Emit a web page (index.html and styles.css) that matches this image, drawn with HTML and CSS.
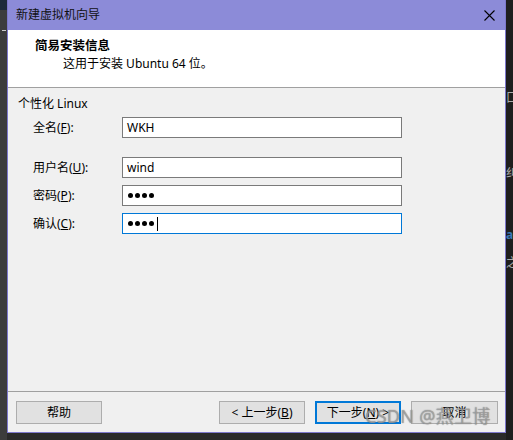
FILE: index.html
```html
<!DOCTYPE html>
<html lang="zh-CN">
<head>
<meta charset="utf-8">
<title>新建虚拟机向导</title>
<link rel="stylesheet" href="styles.css">
</head>
<body>
<div class="screen">
  <div class="strip-left"><div class="strip-top"></div><div class="strip-mark"></div></div>
  <div class="dialog">
    <div class="titlebar">
      <span class="title">新建虚拟机向导</span>
      <svg class="close" width="11" height="11" viewBox="0 0 11 11"><path d="M0.5 0.5 L10.5 10.5 M10.5 0.5 L0.5 10.5" stroke="#000" stroke-width="1.1" fill="none"/></svg>
    </div>
    <div class="header">
      <div class="h-title">简易安装信息</div>
      <div class="h-sub">这用于安装 Ubuntu 64 位。</div>
    </div>
    <div class="content">
      <div class="group">个性化 Linux</div>
      <div class="row">
        <span class="label">全名(<u>F</u>):</span>
        <div class="field">WKH</div>
      </div>
      <div class="row gap-big">
        <span class="label">用户名(<u>U</u>):</span>
        <div class="field">wind</div>
      </div>
      <div class="row">
        <span class="label">密码(<u>P</u>):</span>
        <div class="field dots"><i class="dot"></i><i class="dot"></i><i class="dot"></i><i class="dot"></i></div>
      </div>
      <div class="row">
        <span class="label">确认(<u>C</u>):</span>
        <div class="field dots focus"><i class="dot"></i><i class="dot"></i><i class="dot"></i><i class="dot"></i><span class="caret"></span></div>
      </div>
    </div>
    <div class="footer">
      <button class="btn">帮助</button>
      <span class="spacer"></span>
      <button class="btn">&lt; 上一步(<u>B</u>)</button>
      <button class="btn default">下一步(<u>N</u>) &gt;</button>
      <button class="btn">取消</button>
    </div>
    <div class="watermark">CSDN @燕卫博</div>
  </div>
  <div class="strip-right">
    <span class="frag f1">口</span>
    <span class="frag f2">纠</span>
    <span class="frag f3">a</span>
    <span class="frag f4">之</span>
  </div>
</div>
</body>
</html>
```
FILE: styles.css
```css
* { box-sizing: border-box; }
html, body { margin: 0; padding: 0; }
body {
  width: 513px;
  height: 440px;
  background: #2a2a2a;
  overflow: hidden;
  font-family: "Noto Sans", "Noto Sans CJK SC", sans-serif;
  font-size: 12px;
  color: #000;
}
.screen {
  display: flex;
  width: 513px;
  height: 440px;
}
.strip-left {
  width: 7px;
  background: #3c3c3c;
  display: flex;
  flex-direction: column;
  overflow: hidden;
}
.strip-top { height: 10px; background: #1c2a3a; }
.strip-mark {
  margin-top: 20px;
  margin-left: 2px;
  width: 4px;
  height: 1px;
  background: #ccc;
}
.dialog {
  position: relative;
  width: 499px;
  height: 433px;
  border: 1px solid #7d78cc;
  border-top: none;
  background: #f0f0f0;
  display: flex;
  flex-direction: column;
}
.titlebar {
  height: 30px;
  background: #8c8bd8;
  display: flex;
  align-items: center;
  padding-left: 8px;
  padding-right: 10px;
}
.title { flex: 1; line-height: 16px; color: #111; }
.close { display: block; }
.header {
  height: 58px;
  background: #fff;
  border-bottom: 1px solid #a0a0a0;
  padding-top: 8px;
}
.h-title {
  font-weight: bold;
  padding-left: 27px;
  line-height: 16px;
  font-size: 12.5px;
}
.h-sub {
  padding-left: 55px;
  line-height: 16px;
  margin-top: 2px;
}
.content {
  flex: 1;
  padding: 8px 0 0 10px;
}
.group { line-height: 16px; margin-bottom: 5px; }
.row {
  display: flex;
  align-items: center;
  height: 21px;
  margin-top: 7px;
}
.group + .row { margin-top: 0; }
.row.gap-big { margin-top: 19px; }
.label {
  width: 104px;
  padding-left: 15px;
  line-height: 16px;
}
.field {
  width: 280px;
  height: 21px;
  border: 1px solid #7a7a7a;
  background: #fff;
  padding-left: 4px;
  line-height: 19px;
  display: flex;
  align-items: center;
}
.field.dots { padding-left: 5px; gap: 2px; }
.dot {
  display: block;
  width: 5px;
  height: 5px;
  border-radius: 50%;
  background: #000;
}
.field.focus { border-color: #0078d7; }
.caret {
  display: block;
  width: 1px;
  height: 14px;
  background: #000;
  margin-left: 1px;
}
.footer {
  height: 41px;
  border-top: 1px solid #a0a0a0;
  display: flex;
  align-items: flex-start;
  padding: 9px 7px 0 8px;
}
.spacer { flex: 1; }
.btn {
  width: 86px;
  height: 23px;
  border: 1px solid #adadad;
  background: #e1e1e1;
  font-family: "Noto Sans", "Noto Sans CJK SC", sans-serif;
  font-size: 12px;
  color: #000;
  padding: 0;
  line-height: 16px;
  margin-left: 10px;
}
.btn:first-child { margin-left: 0; }
.btn:last-child { width: 87px; }
.btn.default { border: 2px solid #0078d7; }
.watermark {
  position: absolute;
  left: 357px;
  top: 404px;
  font-size: 18px;
  line-height: 24px;
  color: rgba(200, 200, 200, 0.55);
  text-shadow: 0 0 1px rgba(60, 60, 60, 0.8);
  white-space: nowrap;
  letter-spacing: 0.3px;
}
.strip-right {
  flex: 1;
  background: #1e1e1e;
  position: relative;
  overflow: hidden;
}
.frag {
  position: absolute;
  left: 0;
  font-size: 12px;
  line-height: 14px;
  color: #aaa;
}
.f1 { top: 91px; }
.f2 { top: 166px; }
.f3 { top: 228px; color: #3a78b5; font-weight: bold; }
.f4 { top: 256px; }
```
